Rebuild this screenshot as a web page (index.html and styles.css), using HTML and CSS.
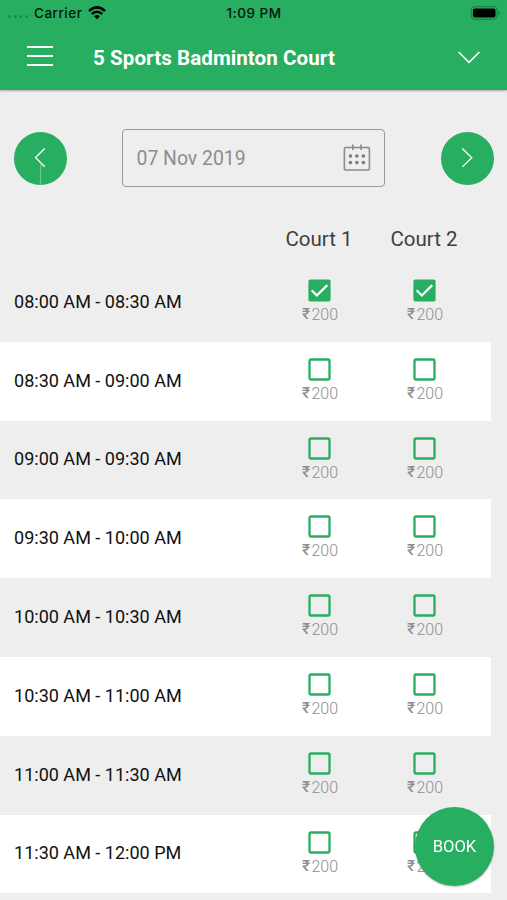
FILE: index.html
```html
<!DOCTYPE html>
<html lang="en">
<head>
<meta charset="utf-8">
<meta name="viewport" content="width=device-width, initial-scale=1">
<title>5 Sports Badminton Court</title>
<link rel="stylesheet" href="styles.css">
</head>
<body>
<svg class="defs" width="0" height="0">
  <symbol id="off" viewBox="0 0 23 23"><rect x="1.5" y="1.5" width="20" height="20" rx="1.4" fill="none" stroke="#27ae60" stroke-width="2.3"/></symbol>
  <symbol id="on" viewBox="0 0 23 23"><rect x=".4" y=".4" width="22.2" height="22.2" rx="2" fill="#27ae60"/><path d="M3.7 11.3l5.1 5.2L19.3 6.1" fill="none" stroke="#fff" stroke-width="2.2"/></symbol>
</svg>
<header class="header">
  <div class="status">
    <div class="carrier"><span class="dots"><i></i><i></i><i></i><i></i></span><span>Carrier</span>
      <svg class="wifi" width="18" height="14" viewBox="0 0 18 14"><path d="M1 5Q9-2.2 17 5M3.8 8Q9 3.4 14.2 8" fill="none" stroke="#000" stroke-width="2.5"/><path d="M6.1 10.3Q9 7.9 11.9 10.3L9 13.3z"/></svg>
    </div>
    <span class="clock">1:09 PM</span>
    <svg class="battery" width="30" height="14" viewBox="0 0 30 14"><rect x="1.2" y=".7" width="26" height="12.6" rx="3.5" fill="none" stroke="#1b7a43"/><rect x="2.9" y="2.4" width="22.6" height="9.2" rx="2"/><path d="M28.4 5v4q1.2-.6 1.2-2t-1.2-2" fill="#1b7a43"/></svg>
  </div>
  <div class="bar">
    <svg class="menu" width="26" height="22" viewBox="0 0 26 22"><path d="M0 2h26M0 11h26M0 20h26" stroke="#fff" stroke-width="2"/></svg>
    <h1>5 Sports Badminton Court</h1>
    <svg class="down" width="22" height="13" viewBox="0 0 22 13"><path d="M.6 1L11 11.4 21.4 1" fill="none" stroke="#fff" stroke-width="1.5"/></svg>
  </div>
</header>
<main>
  <div class="dates">
    <button class="round"><svg width="53" height="53" viewBox="0 0 53 53"><path d="M30.7 16.5L21.5 25.5l9.2 9.3" fill="none" stroke="#fff" stroke-width="1.3"/><path d="M26.5 31v22" stroke="#68c78e" stroke-width="1.2"/></svg></button>
    <div class="field"><span>07 Nov 2019</span>
      <svg width="28" height="28" viewBox="0 0 28 28" fill="none" stroke="#8a8d8e" stroke-width="1.6"><rect x="1.4" y="3.5" width="25" height="22.5" rx="1"/><path d="M9.8 .5v5.5M18 .5v5.5" /><g fill="#7b7e7f" stroke="none"><circle cx="7.4" cy="12.1" r="1.8"/><circle cx="13.9" cy="12.1" r="1.8"/><circle cx="20.4" cy="12.1" r="1.8"/><circle cx="7.4" cy="18.6" r="1.8"/><circle cx="13.9" cy="18.6" r="1.8"/><circle cx="20.4" cy="18.6" r="1.8"/></g></svg>
    </div>
    <button class="round"><svg width="53" height="53" viewBox="0 0 53 53"><path d="M21.3 16.5l9.5 9.2-9.5 9.2" fill="none" stroke="#fff" stroke-width="1.3"/></svg></button>
  </div>
  <div class="heads"><span></span><span>Court 1</span><span>Court 2</span></div>
  <div class="slots">
    <div class="row"><span class="time">08:00 AM - 08:30 AM</span><div class="cell"><svg><use href="#on"/></svg><p><b>₹</b>200</p></div><div class="cell"><svg><use href="#on"/></svg><p><b>₹</b>200</p></div></div>
    <div class="row"><span class="time">08:30 AM - 09:00 AM</span><div class="cell"><svg><use href="#off"/></svg><p><b>₹</b>200</p></div><div class="cell"><svg><use href="#off"/></svg><p><b>₹</b>200</p></div></div>
    <div class="row"><span class="time">09:00 AM - 09:30 AM</span><div class="cell"><svg><use href="#off"/></svg><p><b>₹</b>200</p></div><div class="cell"><svg><use href="#off"/></svg><p><b>₹</b>200</p></div></div>
    <div class="row"><span class="time">09:30 AM - 10:00 AM</span><div class="cell"><svg><use href="#off"/></svg><p><b>₹</b>200</p></div><div class="cell"><svg><use href="#off"/></svg><p><b>₹</b>200</p></div></div>
    <div class="row"><span class="time">10:00 AM - 10:30 AM</span><div class="cell"><svg><use href="#off"/></svg><p><b>₹</b>200</p></div><div class="cell"><svg><use href="#off"/></svg><p><b>₹</b>200</p></div></div>
    <div class="row"><span class="time">10:30 AM - 11:00 AM</span><div class="cell"><svg><use href="#off"/></svg><p><b>₹</b>200</p></div><div class="cell"><svg><use href="#off"/></svg><p><b>₹</b>200</p></div></div>
    <div class="row"><span class="time">11:00 AM - 11:30 AM</span><div class="cell"><svg><use href="#off"/></svg><p><b>₹</b>200</p></div><div class="cell"><svg><use href="#off"/></svg><p><b>₹</b>200</p></div></div>
    <div class="row"><span class="time">11:30 AM - 12:00 PM</span><div class="cell"><svg><use href="#off"/></svg><p><b>₹</b>200</p></div><div class="cell"><svg><use href="#off"/></svg><p><b>₹</b>200</p></div></div>
  </div>
</main>
<button class="book">BOOK</button>
</body>
</html>
```
FILE: styles.css
```css
* { box-sizing: border-box; }
body { margin: 0; height: 900px; overflow: hidden; background: #eee; font-family: Roboto, sans-serif; color: #111; }
.defs { position: absolute; }
h1, p { margin: 0; }
button { border: 0; padding: 0; background: #27ae60; color: #fff; font-family: inherit; }
.header { height: 90px; background: #27ae60; box-shadow: 0 1px 2px rgba(0, 0, 0, .3); }
.status { height: 26px; display: grid; grid-template-columns: 1fr auto 1fr; align-items: center; padding: 0 7px 0 8px; font: 500 13.5px/26px Inter, sans-serif; letter-spacing: .5px; color: #04160b; }
.carrier { display: flex; align-items: center; }
.dots { display: flex; gap: 2.6px; width: 26px; padding-top: 7px; }
.dots i { width: 3px; height: 3px; border-radius: 50%; background: #1e8c4c; }
.wifi { margin-left: 5.5px; }
.battery { justify-self: end; }
.bar { height: 64px; display: flex; align-items: center; padding: 0 27px 0 27px; }
.menu { margin-top: -4px; }
h1 { flex: 1; margin-left: 40px; font-size: 20.6px; font-weight: 700; line-height: 24px; letter-spacing: .05px; color: #fff; }
.down { margin-top: -2px; }
.dates { display: flex; align-items: center; justify-content: space-between; padding: 39px 13px 0 14px; }
.round { width: 53px; height: 53px; border-radius: 50%; }
.round svg { display: block; }
.field { width: 263px; height: 58px; display: flex; align-items: center; justify-content: space-between; margin-left: -2px; padding: 0 13px; border: 1.5px solid #999; border-radius: 4px; font-size: 19.4px; line-height: 24px; color: #8b8d8e; }
.field span { padding: 2px 0 0 1px; }
.heads, .row { display: grid; grid-template-columns: 252.5px 105px 105px; padding-left: 14px; }
.heads { height: 76px; padding-top: 40px; font-size: 20.5px; line-height: 24px; text-align: center; color: #3e3e3e; }
.row { width: 491px; height: 78.8px; }
.row:nth-child(even) { background: #fff; }
.time { align-self: center; margin-top: -1px; font-size: 18.05px; line-height: 22px; }
.cell { display: flex; flex-direction: column; align-items: center; padding-top: 16px; }
.cell svg { width: 23px; height: 23px; }
.cell p { display: flex; gap: 1.5px; margin: 4px 0 0 2px; font-size: 16px; line-height: 18px; font-weight: 300; color: #8e8e8e; }
.cell b { font-size: 15.5px; line-height: 17px; font-weight: 500; }
.book { position: fixed; right: 13px; bottom: 14px; width: 79px; height: 79px; border-radius: 50%; font-size: 16.6px; box-shadow: 0 1px 2px rgba(0, 0, 0, .25); }
```
